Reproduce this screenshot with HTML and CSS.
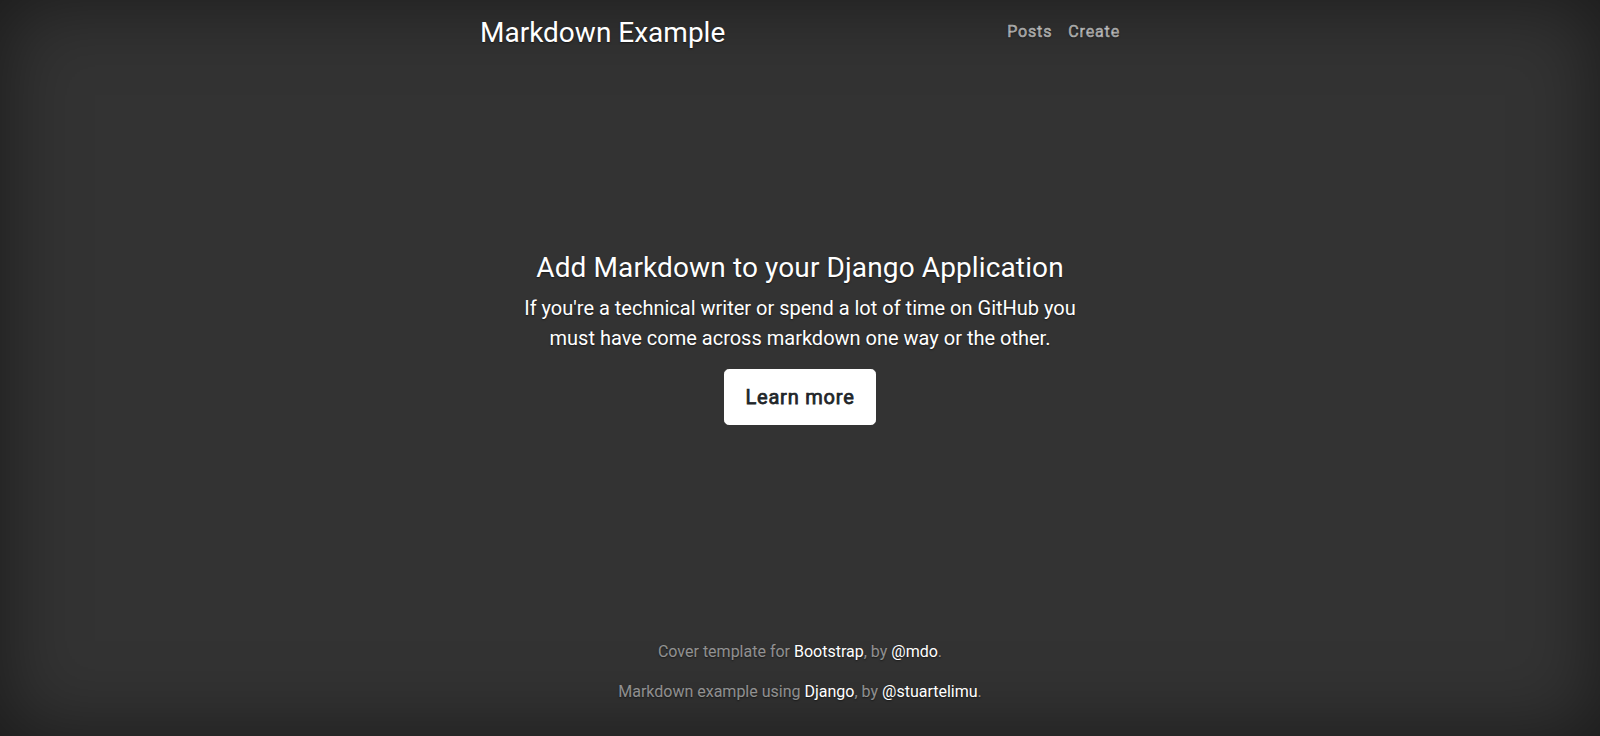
FILE: index.html
```html
<!DOCTYPE html>
<html lang="en">
<head>
<meta charset="utf-8">
<title>Markdown Example</title>
<link rel="stylesheet" href="styles.css">
</head>
<body>
<div class="cover-container">
  <header class="masthead">
    <h3 class="masthead-brand">Markdown Example</h3>
    <nav class="nav-masthead">
      <a class="nav-link" href="#">Posts</a>
      <a class="nav-link" href="#">Create</a>
    </nav>
  </header>
  <main class="cover">
    <h3 class="cover-heading">Add Markdown to your Django Application</h3>
    <p class="lead">If you're a technical writer or spend a lot of time on GitHub you must have come across markdown one way or the other.</p>
    <p class="lead"><a href="#" class="btn-lg">Learn more</a></p>
  </main>
  <footer class="mastfoot">
    <p>Cover template for <a href="#">Bootstrap</a>, by <a href="#">@mdo</a>.</p>
    <p>Markdown example using <a href="#">Django</a>, by <a href="#">@stuartelimu</a>.</p>
  </footer>
</div>
</body>
</html>
```
FILE: styles.css
```css
* { box-sizing: border-box; }
html, body { height: 100%; margin: 0; background-color: #333; }
body {
  display: flex;
  color: #fff;
  font-family: Roboto, "Liberation Sans", sans-serif;
  font-size: 16px;
  line-height: 1.5;
  text-shadow: 0 0.05rem 0.1rem rgba(0,0,0,.5);
  box-shadow: inset 0 0 5rem rgba(0,0,0,.5);
}
a { text-decoration: none; color: #fff; }
p { margin: 0 0 1rem; }
.cover-container {
  display: flex;
  flex-direction: column;
  width: 100%;
  height: 100%;
  max-width: 42em;
  padding: 1rem;
  margin: 0 auto;
}
.masthead {
  display: flex;
  justify-content: space-between;
  align-items: flex-start;
  margin-bottom: auto;
}
.masthead-brand {
  margin: 0;
  font-size: 1.75rem;
  font-weight: 400;
  line-height: 1.2;
}
.nav-masthead { display: flex; }
.nav-link {
  display: block;
  padding: 0.25rem 0;
  font-weight: 400;
  -webkit-text-stroke: 0.6px rgba(255,255,255,.5);
  letter-spacing: 0.85px;
  color: rgba(255,255,255,.5);
  border-bottom: 0.25rem solid transparent;
}
.nav-link + .nav-link { margin-left: 1rem; }
.cover { padding: 0 1.5rem; text-align: center; }
.cover-heading {
  margin: 0 0 0.5rem;
  font-size: 1.75rem;
  font-weight: 400;
  line-height: 1.2;
  letter-spacing: 0.12px;
}
.lead { font-size: 1.25rem; font-weight: 400; }
.btn-lg {
  display: inline-block;
  padding: 0.75rem 1.25rem;
  font-size: 1.25rem;
  line-height: 1.5;
  font-weight: 400;
  -webkit-text-stroke: 0.75px #212529;
  letter-spacing: 0.8px;
  color: #212529;
  background-color: #fff;
  border: 1px solid #fff;
  border-radius: 0.3rem;
  text-shadow: none;
  vertical-align: middle;
}
.mastfoot {
  margin-top: auto;
  text-align: center;
  color: rgba(255,255,255,.5);
}
```
